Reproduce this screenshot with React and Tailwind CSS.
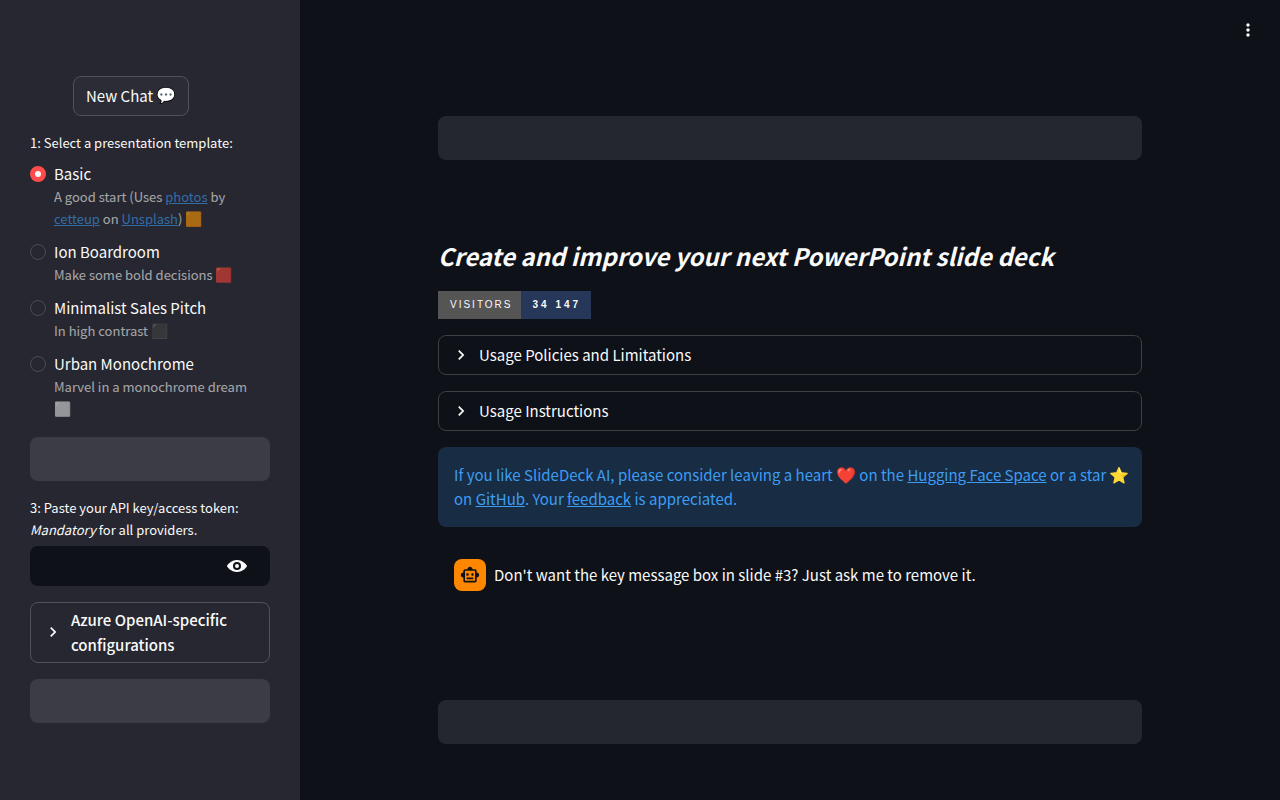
import React, { useState } from 'react';
import { MdChevronRight, MdMoreVert, MdOutlineSmartToy } from 'react-icons/md';

const templates = [
    {
        value: 'basic',
        name: 'Basic',
        caption: (
            <>
                A good start (Uses <CaptionLink>photos</CaptionLink> by <CaptionLink>cetteup</CaptionLink> on{' '}
                <CaptionLink>Unsplash</CaptionLink>) <Emoji small>🟧</Emoji>
            </>
        ),
    },
    { value: 'ion', name: 'Ion Boardroom', caption: <>Make some bold decisions <Emoji small>🟥</Emoji></> },
    { value: 'minimalist', name: 'Minimalist Sales Pitch', caption: <>In high contrast <Emoji small>⬛</Emoji></> },
    { value: 'urban', name: 'Urban Monochrome', caption: <>Marvel in a monochrome dream <Emoji small>⬜</Emoji></> },
];

function Emoji({ children, small = false }) {
    return (
        <span className={`font-['Noto_Color_Emoji',sans-serif] leading-none ${small ? 'text-[14px]' : 'text-[16px]'}`}>
            {children}
        </span>
    );
}

function CaptionLink({ children }) {
    return <a href="#" className="text-[#3d9df3] underline">{children}</a>;
}

const Skeleton = ({ className }) => <div className={`h-11 shrink-0 rounded-lg ${className}`} />;

const Expander = ({ title, bold = false, className = '' }) => (
    <details className={`rounded-lg border ${className}`}>
        <summary className={`flex cursor-pointer list-none items-center gap-2 px-3 ${bold ? 'pt-1 pb-[5px] font-medium leading-[25px]' : 'py-[7px] leading-6'}`}>
            <MdChevronRight className="size-5 shrink-0" />
            <span>{title}</span>
        </summary>
    </details>
);

const TemplateOption = ({ template, checked, onChange }) => (
    <label className="flex cursor-pointer items-start gap-2 pr-2">
        <input
            type="radio"
            name="template"
            value={template.value}
            checked={checked}
            onChange={() => onChange(template.value)}
            className="mt-1 size-4 shrink-0 appearance-none rounded-full border border-[#4b4c54] checked:border-[5px] checked:border-[#ff4b4b] checked:bg-[#fafafa]"
        />
        <span>
            <span className="block leading-6">{template.name}</span>
            <span className="block text-[13px] leading-[22px] opacity-60">{template.caption}</span>
        </span>
    </label>
);

const Sidebar = () => {
    const [selected, setSelected] = useState('basic');
    const [showKey, setShowKey] = useState(false);

    return (
        <aside className="flex w-[300px] shrink-0 flex-col gap-4 bg-[#262730] px-[30px] pt-[76px] pb-14">
            <button className="ml-[43px] flex h-10 items-center gap-[3px] self-start rounded-lg border border-[#51525a] bg-[#2b2c36] px-3">
                New Chat <Emoji>💬</Emoji>
            </button>

            <fieldset className="pb-px">
                <legend className="mb-2 text-[13px] leading-[22px]">1: Select a presentation template:</legend>
                <div className="flex flex-col gap-[10px]">
                    {templates.map(template => (
                        <TemplateOption
                            key={template.value}
                            template={template}
                            checked={selected === template.value}
                            onChange={setSelected}
                        />
                    ))}
                </div>
            </fieldset>

            <Skeleton className="bg-[#3c3c45]" />

            <div>
                <label htmlFor="api-key" className="mb-[5px] block text-[13px] leading-[22px]">
                    3: Paste your API key/access token:
                    <br />
                    <em>Mandatory</em> for all providers.
                </label>
                <div className="flex h-10 items-center rounded-lg bg-[#0e1117]">
                    <input
                        id="api-key"
                        type={showKey ? 'text' : 'password'}
                        className="h-full w-0 min-w-0 grow bg-transparent px-3 outline-none"
                    />
                    <button aria-label="Show password text" onClick={() => setShowKey(!showKey)} className="mr-[21px]">
                        <svg viewBox="0 0 24 24" className="size-6" fill="currentColor">
                            <path fillRule="evenodd" clipRule="evenodd" d="M12 6C6 6 2 11 2 12s4 6 10 6 10-5 10-6-4-6-10-6zm0 2a4 4 0 1 1 0 8 4 4 0 0 1 0-8z" />
                            <circle cx="12" cy="12" r="2" />
                        </svg>
                    </button>
                </div>
            </div>

            <Expander title="Azure OpenAI-specific configurations" bold className="border-[#51525a]" />

            <Skeleton className="bg-[#3c3c45]" />
        </aside>
    );
};

const App = () => (
    <div className="flex min-h-screen bg-[#0e1117] font-['Noto_Sans_CJK_SC','Noto_Color_Emoji',sans-serif] text-[15px] text-[#fafafa]">
        <Sidebar />

        <div className="flex min-w-0 grow flex-col">
            <header className="flex h-[60px] shrink-0 items-center justify-end px-[22px]">
                <button aria-label="Main menu">
                    <MdMoreVert className="size-5" />
                </button>
            </header>

            <main className="mx-auto flex w-full max-w-[736px] grow flex-col gap-4 px-4 pt-14 pb-14">
                <Skeleton className="bg-[#25272f]" />

                <h1 className="mt-[61px] text-[24px] font-semibold italic leading-[38px]">
                    Create and improve your next PowerPoint slide deck
                </h1>

                <div className="flex h-7 items-center self-start font-['Liberation_Sans',sans-serif] text-[10px] leading-7">
                    <span className="bg-[#555555] pr-2 pl-3 tracking-[2px]">VISITORS</span>
                    <span className="bg-[#263759] pr-[10px] pl-3 font-bold tracking-[3px]">34 147</span>
                </div>

                <Expander title="Usage Policies and Limitations" className="border-[#3d3f44]" />
                <Expander title="Usage Instructions" className="border-[#3d3f44]" />

                <div className="rounded-lg bg-[#182c43] py-4 pr-2 pl-4 leading-6 text-[#3d9df3]">
                    <p>
                        If you like SlideDeck AI, please consider leaving a heart <Emoji>❤️</Emoji> on the{' '}
                        <a href="#" className="underline">Hugging Face Space</a> or a star <Emoji>⭐</Emoji> on{' '}
                        <a href="#" className="underline">GitHub</a>. Your <a href="#" className="underline">feedback</a> is
                        appreciated.
                    </p>
                </div>

                <div className="flex items-center gap-2 p-4">
                    <div className="flex size-8 shrink-0 items-center justify-center rounded-lg bg-[#ff8700] text-[#0e1117]">
                        <MdOutlineSmartToy className="size-5" />
                    </div>
                    <p className="leading-6">Don't want the key message box in slide #3? Just ask me to remove it.</p>
                </div>

                <Skeleton className="mt-auto bg-[#25272f]" />
            </main>
        </div>
    </div>
);

export default App;
